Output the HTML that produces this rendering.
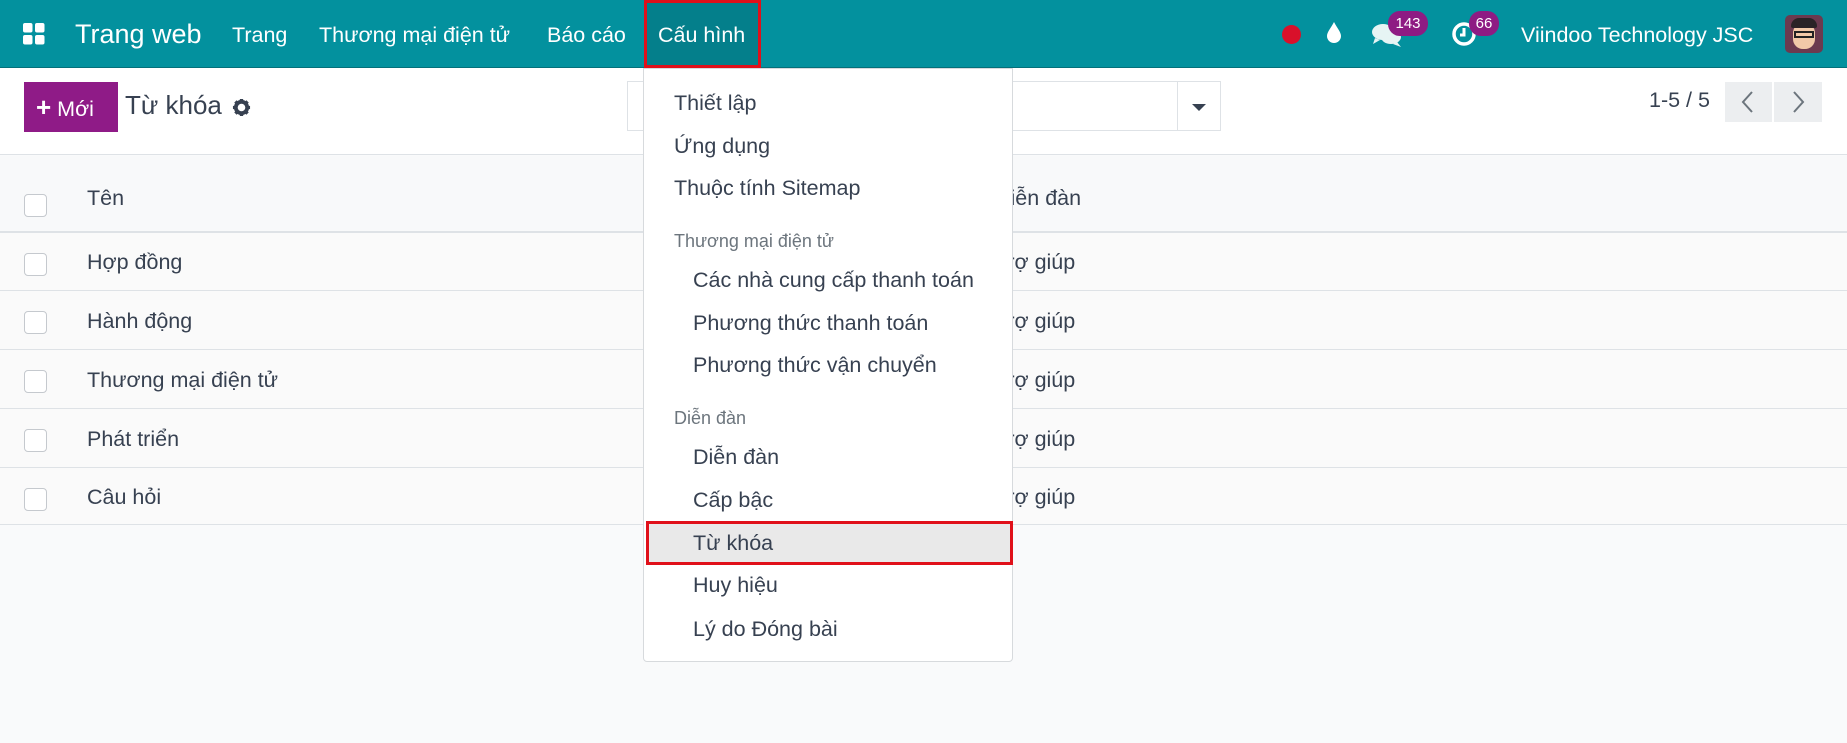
<!DOCTYPE html>
<html><head><meta charset="utf-8"><style>
*{box-sizing:border-box;margin:0;padding:0}
body{width:1847px;height:743px;overflow:hidden;background:#f9fafb;font-family:"Liberation Sans","Noto Sans CJK SC",sans-serif;color:#374151;position:relative}
.abs{position:absolute;white-space:nowrap}
.nav{position:absolute;left:0;top:0;width:1847px;height:68px;background:#03919e;border-bottom:1px solid #04707a}
.nav .t{position:absolute;color:#fff;font-size:21.5px;top:23px}
.cp{position:absolute;left:0;top:68px;width:1847px;height:87px;background:#fff;border-bottom:1px solid #dee2e6}
.row{position:absolute;left:0;width:1847px;border-bottom:1px solid #dee2e6;background:#fafafa}
.cb{position:absolute;left:24px;width:23px;height:23px;border:1px solid #c5c9ce;border-radius:4px;background:#fff}
.rt{position:absolute;left:87px;font-size:21.5px;color:#374151}
.menu{position:absolute;left:643px;top:68px;width:370px;height:594px;background:#fff;border:1px solid #d7dadd;border-radius:0 0 4px 4px}
.mi{position:absolute;font-size:21.5px;color:#374151}
.mh{position:absolute;font-size:18px;color:#6c757d}
.badge{position:absolute;background:#8e1b83;color:#fff;font-size:15px;border-radius:12px;height:25px;line-height:25px;text-align:center}
</style></head><body>
<div class="nav">
  <svg class="abs" style="left:22px;top:22px" width="24" height="24" viewBox="0 0 24 24" fill="#fff"><rect x="1" y="1" width="9.5" height="9.5" rx="2"/><rect x="13" y="1" width="9.5" height="9.5" rx="2"/><rect x="1" y="13" width="9.5" height="9.5" rx="2"/><rect x="13" y="13" width="9.5" height="9.5" rx="2"/></svg>
  <div class="t" style="left:75px;top:19px;font-size:27px">Trang web</div>
  <div class="t" style="left:232px">Trang</div>
  <div class="t" style="left:319px">Thương mại điện tử</div>
  <div class="t" style="left:547px">Báo cáo</div>
  <div class="abs" style="left:644px;top:0;width:117px;height:68px;border:3px solid #e0101a;background:#047f8b"></div>
  <div class="t" style="left:658px">Cấu hình</div>
  <div class="abs" style="left:1282px;top:25px;width:19px;height:19px;border-radius:50%;background:#d9102a"></div>
  <svg class="abs" style="left:1325px;top:21px" width="18" height="24" viewBox="0 0 18 24"><path d="M9 1C6 7 2 11 2 15a7 7 0 0 0 14 0C16 11 12 7 9 1z" fill="#fff"/></svg>
  <svg class="abs" style="left:1371px;top:22px" width="34" height="26" viewBox="0 0 34 26" fill="#e6f4f4"><ellipse cx="12" cy="10" rx="11" ry="8"/><path d="M4 16l-2 6 7-4z"/><ellipse cx="20" cy="15" rx="10" ry="7"/><path d="M26 20l4 5-8-3z"/></svg>
  <div class="badge" style="left:1388px;top:11px;width:40px">143</div>
  <svg class="abs" style="left:1451px;top:20px" width="26" height="26" viewBox="0 0 26 26"><circle cx="13" cy="14" r="10" fill="none" stroke="#fff" stroke-width="3.5"/><path d="M13 8v7h-4" fill="none" stroke="#fff" stroke-width="3"/></svg>
  <div class="badge" style="left:1469px;top:11px;width:30px">66</div>
  <div class="t" style="left:1521px">Viindoo Technology JSC</div>
  <div class="abs" style="left:1785px;top:15px;width:38px;height:38px;border-radius:5px;background:#6b3a4f;overflow:hidden">
    <div class="abs" style="left:8px;top:8px;width:22px;height:26px;border-radius:10px;background:#f2c9a8"></div>
    <div class="abs" style="left:6px;top:3px;width:26px;height:10px;border-radius:8px 8px 2px 2px;background:#2a2326"></div>
    <div class="abs" style="left:9px;top:16px;width:20px;height:7px;border:2px solid #222"></div>
  </div>
</div>
<div class="cp">
  <div class="abs" style="left:24px;top:14px;width:94px;height:50px;background:#8f1b87;color:#fff;font-size:21.5px;line-height:50px;padding-left:12px"><b style="font-size:26px">+</b> Mới</div>
  <div class="abs" style="left:125px;top:22px;font-size:26px;color:#374151">Từ khóa</div>
  <svg class="abs" style="left:232px;top:30px" width="19" height="19" viewBox="0 0 20 20"><circle cx="10" cy="10" r="6" fill="none" stroke="#374151" stroke-width="4"/><g stroke="#374151" stroke-width="3.5"><path d="M10 1v4M10 15v4M1 10h4M15 10h4M3.6 3.6l2.8 2.8M13.6 13.6l2.8 2.8M3.6 16.4l2.8-2.8M13.6 6.4l2.8-2.8"/></g></svg>
  <div class="abs" style="left:627px;top:13px;width:594px;height:50px;border:1px solid #dee2e6;background:#fff"></div>
  <div class="abs" style="left:1177px;top:13px;width:1px;height:50px;background:#dee2e6"></div>
  <div class="abs" style="left:1192px;top:36px;width:0;height:0;border-left:7px solid transparent;border-right:7px solid transparent;border-top:7px solid #374151"></div>
  <div class="abs" style="left:1649px;top:20px;font-size:21.5px">1-5 / 5</div>
  <div class="abs" style="left:1725px;top:14px;width:47px;height:40px;background:#eceef0"></div>
  <div class="abs" style="left:1774px;top:14px;width:48px;height:40px;background:#eceef0"></div>
  <svg class="abs" style="left:1738px;top:22px" width="20" height="24" viewBox="0 0 20 24"><path d="M14 2L5 12l9 10" fill="none" stroke="#6c757d" stroke-width="2"/></svg>
  <svg class="abs" style="left:1788px;top:22px" width="20" height="24" viewBox="0 0 20 24"><path d="M6 2l9 10-9 10" fill="none" stroke="#6c757d" stroke-width="2"/></svg>
</div>
<div class="row" style="top:156px;height:77px;background:#f8f9fa;border-bottom:2px solid #dee2e6">
  <div class="cb" style="top:38px"></div><div class="rt" style="top:30px">Tên</div><div class="rt" style="left:995px;top:30px">Diễn đàn</div>
</div>
<div class="row" style="top:233px;height:58px"><div class="cb" style="top:20px"></div><div class="rt" style="top:17px">Hợp đồng</div><div class="rt" style="left:995px;top:17px">Trợ giúp</div></div>
<div class="row" style="top:291px;height:59px"><div class="cb" style="top:20px"></div><div class="rt" style="top:18px">Hành động</div><div class="rt" style="left:995px;top:18px">Trợ giúp</div></div>
<div class="row" style="top:350px;height:59px"><div class="cb" style="top:20px"></div><div class="rt" style="top:18px">Thương mại điện tử</div><div class="rt" style="left:995px;top:18px">Trợ giúp</div></div>
<div class="row" style="top:409px;height:59px"><div class="cb" style="top:20px"></div><div class="rt" style="top:18px">Phát triển</div><div class="rt" style="left:995px;top:18px">Trợ giúp</div></div>
<div class="row" style="top:468px;height:57px"><div class="cb" style="top:20px"></div><div class="rt" style="top:17px">Câu hỏi</div><div class="rt" style="left:995px;top:17px">Trợ giúp</div></div>
<div class="menu">
  <div class="mi" style="left:30px;top:22px">Thiết lập</div>
  <div class="mi" style="left:30px;top:65px">Ứng dụng</div>
  <div class="mi" style="left:30px;top:107px">Thuộc tính Sitemap</div>
  <div class="mh" style="left:30px;top:162px">Thương mại điện tử</div>
  <div class="mi" style="left:49px;top:199px">Các nhà cung cấp thanh toán</div>
  <div class="mi" style="left:49px;top:242px">Phương thức thanh toán</div>
  <div class="mi" style="left:49px;top:284px">Phương thức vận chuyển</div>
  <div class="mh" style="left:30px;top:339px">Diễn đàn</div>
  <div class="mi" style="left:49px;top:376px">Diễn đàn</div>
  <div class="mi" style="left:49px;top:419px">Cấp bậc</div>
  <div class="abs" style="left:2px;top:452px;width:367px;height:44px;background:#e9e9e9;border:3px solid #e0101a"></div>
  <div class="mi" style="left:49px;top:462px">Từ khóa</div>
  <div class="mi" style="left:49px;top:504px">Huy hiệu</div>
  <div class="mi" style="left:49px;top:548px">Lý do Đóng bài</div>
</div>
</body></html>
